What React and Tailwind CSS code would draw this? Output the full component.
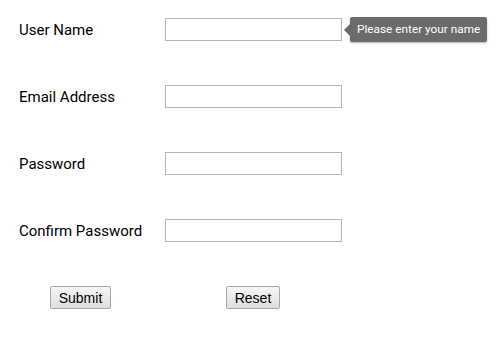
export default function App() {
  const rows = [
    { label: 'User Name', type: 'text', tip: 'Please enter your name' },
    { label: 'Email Address', type: 'email' },
    { label: 'Password', type: 'password' },
    { label: 'Confirm Password', type: 'password' },
  ];

  return (
    <div className="w-[500px] h-[343px] bg-white pt-[18px] pl-[19px] font-['Roboto',sans-serif] text-[15px] text-black">
      <div className="flex flex-col gap-[44px]">
        {rows.map((r) => (
          <div key={r.label} className="flex items-center h-[23px]">
            <label className="w-[146px] leading-none pt-[2px]">{r.label}</label>
            <input
              type={r.type}
              className="w-[177px] h-[23px] border border-[#b5b5b5] bg-white outline-none px-1"
            />
            {r.tip && (
              <div className="relative ml-[8px] flex items-center">
                <span className="absolute -left-[6px] top-1/2 -translate-y-1/2 w-0 h-0 border-y-[6px] border-y-transparent border-r-[6px] border-r-[#6b6b6b]" />
                <div className="h-[25px] px-[7px] flex items-center rounded-[2px] bg-[#6b6b6b] text-white text-[11.8px] whitespace-nowrap shadow-[0_1px_2px_rgba(0,0,0,0.3)]">
                  {r.tip}
                </div>
              </div>
            )}
          </div>
        ))}

        <div className="flex items-center h-[23px]">
          <button className="ml-[31px] w-[61px] h-[23px] border border-[#a8a8a8] rounded-[2px] bg-gradient-to-b from-[#f6f6f6] to-[#dedede] font-['Liberation_Sans',Arial,sans-serif] text-[14px] text-black leading-none">
            Submit
          </button>
          <button className="ml-[115px] w-[54px] h-[23px] border border-[#a8a8a8] rounded-[2px] bg-gradient-to-b from-[#f6f6f6] to-[#dedede] font-['Liberation_Sans',Arial,sans-serif] text-[14px] text-black leading-none">
            Reset
          </button>
        </div>
      </div>
    </div>
  );
}
